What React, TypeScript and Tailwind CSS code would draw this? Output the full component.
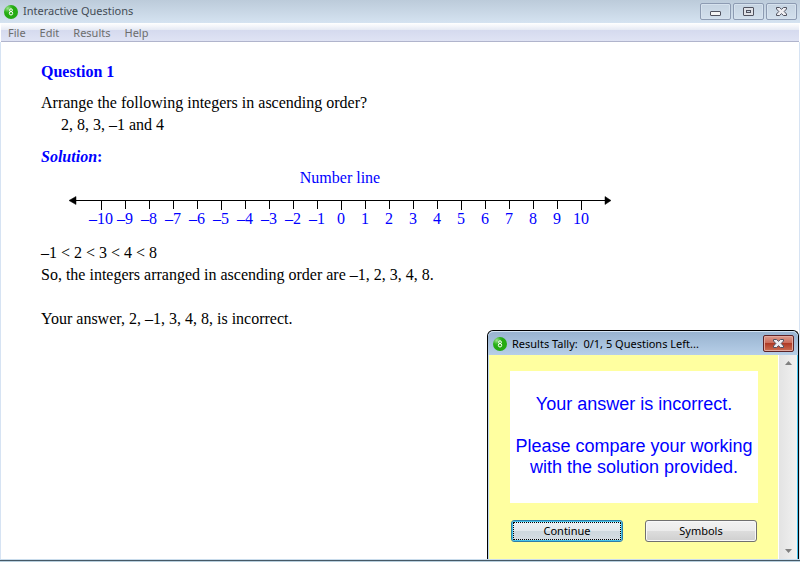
import React, { useState } from 'react';

const menus = ['File', 'Edit', 'Results', 'Help'];
const ticks = Array.from({ length: 21 }, (_, i) => i - 10);

const formatNumber = (n: number) => (n < 0 ? `–${Math.abs(n)}` : `${n}`);

const AppIcon: React.FC = () => (
  <svg width="14" height="14" viewBox="0 0 14 14" className="shrink-0" aria-hidden="true">
    <defs>
      <radialGradient id="ball" cx="0.27" cy="0.24" r="0.4">
        <stop offset="0" stopColor="#9fe392" />
        <stop offset="0.7" stopColor="#33b620" />
        <stop offset="1" stopColor="#24ab12" />
      </radialGradient>
    </defs>
    <circle cx="7" cy="7" r="7" fill="url(#ball)" />
    <circle cx="7" cy="5.2" r="1.4" fill="none" stroke="#fff" strokeWidth="1" />
    <circle cx="7" cy="8.3" r="1.7" fill="none" stroke="#fff" strokeWidth="1" />
  </svg>
);

const CrossIcon: React.FC = () => (
  <svg width="11" height="9" viewBox="0 0 11 9" aria-hidden="true">
    <path
      d="M0.5 0.5H3.5L5.5 2.3L7.5 0.5H10.5V2L8.2 4.5L10.5 7V8.5H7.5L5.5 6.7L3.5 8.5H0.5V7L2.8 4.5L0.5 2Z"
      fill="#eeeef2"
      stroke="#50525f"
      strokeWidth="1"
    />
  </svg>
);

const NumberLine: React.FC = () => (
  <svg width="600" height="74" viewBox="0 0 600 74" className="block max-w-full font-['Liberation_Serif',serif] text-base" role="img" aria-label="Number line">
    <text x="299" y="15" textAnchor="middle" fill="#0000ff">Number line</text>
    <path d="M34 32.5H566" stroke="#000" />
    <path d="M28 32.5L35 28.5V36.5Z M570 32.5L564 28.5V36.5Z" fill="#000" stroke="#000" strokeWidth="0.5" />
    {ticks.map((n) => {
      const x = 300 + n * 24;
      return (
        <g key={n}>
          <path d={`M${x + 0.5} 33V${n % 5 === 0 ? 42 : 41}`} stroke="#000" />
          <text x={x} y="56" textAnchor="middle" fill="#0000ff">{formatNumber(n)}</text>
        </g>
      );
    })}
  </svg>
);

const captionButton = 'flex h-[17px] w-[31px] items-center justify-center rounded-[2px] border border-[#8d9bb2] bg-gradient-to-b from-[#c5d3e1] to-[#d3e0ed] shadow-[inset_0_0_0_1px_#d6e2ee]';

const pushButton = 'h-[22px] w-28 rounded-[3px] border text-[11px] leading-5';

const ResultsDialog: React.FC<{ onClose: () => void }> = ({ onClose }) => (
  <section
    role="dialog"
    aria-label="Results Tally"
    className="absolute right-0 bottom-0 flex w-[312px] flex-col rounded-t-md border border-b-0 border-black bg-[#b5cce6]"
  >
    <header className="flex h-6 items-center gap-[5px] rounded-t-md border-t border-[#d5e5f5] bg-gradient-to-b from-[#98b3d0] to-[#b7cfe8] pr-1 pl-[5px]">
      <AppIcon />
      <h2 className="flex-1 text-[11px] whitespace-pre text-black">Results Tally:  0/1, 5 Questions Left...</h2>
      <button
        type="button"
        aria-label="Close"
        onClick={onClose}
        className="flex h-[17px] w-[31px] items-center justify-center rounded-[2px] border border-[#5c2327] bg-[linear-gradient(#dc9a8c_0%,#cb6d5b_45%,#b03b26_50%,#cc6e52_100%)] shadow-[inset_0_0_0_1px_#e2a99e]"
      >
        <CrossIcon />
      </button>
    </header>
    <div className="flex border-r border-l border-r-[#46c4f0] border-l-[#c0d8ee]">
      <div className="flex-1 bg-[#ffffa0] pt-4 pr-5 pb-[17px] pl-[21px]">
        <div className="h-[132px] bg-white pt-[23px] text-center font-['Liberation_Sans',sans-serif] text-lg leading-[21px] text-[#0000ff]">
          <p>Your answer is incorrect.</p>
          <p className="mt-[21px]">
            Please compare your working
            <br />
            with the solution provided.
          </p>
        </div>
        <div className="mt-[17px] flex gap-[22px] pl-px">
          <button
            type="button"
            onClick={onClose}
            className={`${pushButton} border-[#2f7da8] bg-[linear-gradient(#eef2f5_0%,#e2e8ec_50%,#ced8de_50%,#d5dde2_100%)] shadow-[inset_0_0_0_1px_#48c5ec] outline-1 outline-offset-[-3px] outline-black outline-dotted`}
          >
            Continue
          </button>
          <button
            type="button"
            className={`${pushButton} border-[#707070] bg-[linear-gradient(#f2f2f2_0%,#ebebeb_50%,#dddddd_50%,#cfcfcf_100%)] shadow-[inset_0_0_0_1px_#f8f8f8]`}
          >
            Symbols
          </button>
        </div>
      </div>
      <div className="flex w-[19px] flex-col items-center justify-between border-l border-white bg-gradient-to-r from-[#e3e3e3] to-[#f1f1f1] py-1.5">
        <svg width="7" height="4" viewBox="0 0 7 4" aria-hidden="true">
          <path d="M0 4L3.5 0L7 4Z" fill="#808080" />
        </svg>
        <svg width="7" height="4" viewBox="0 0 7 4" aria-hidden="true">
          <path d="M0 0L3.5 4L7 0Z" fill="#808080" />
        </svg>
      </div>
    </div>
  </section>
);

const App: React.FC = () => {
  const [showResults, setShowResults] = useState(true);

  return (
    <div className="flex min-h-screen flex-col bg-white font-['Noto_Sans','Open_Sans',sans-serif]">
      <header className="flex h-[23px] items-center gap-[5px] bg-gradient-to-b from-[#bccbda] to-[#d5e3f1] pr-[3px] pl-1">
        <AppIcon />
        <h1 className="flex-1 text-[11px] text-[#444c55]">Interactive Questions</h1>
        <div className="flex gap-0.5">
          <button type="button" aria-label="Minimize" className={captionButton}>
            <svg width="11" height="9" viewBox="0 0 11 9" aria-hidden="true">
              <rect x="0.5" y="4.5" width="10" height="4" rx="0.5" fill="#f4f4f4" stroke="#50525f" />
            </svg>
          </button>
          <button type="button" aria-label="Maximize" className={captionButton}>
            <svg width="11" height="9" viewBox="0 0 11 9" aria-hidden="true">
              <rect x="0.5" y="0.5" width="10" height="8" rx="0.5" fill="#dfe1e6" stroke="#50525f" />
              <rect x="3.5" y="3.5" width="4" height="2" fill="#c9d6e4" stroke="#50525f" />
            </svg>
          </button>
          <button type="button" aria-label="Close" className={captionButton}>
            <CrossIcon />
          </button>
        </div>
      </header>
      <nav className="mx-px flex h-[19px] items-center gap-[14px] border-b border-[#b0b4cc] bg-[linear-gradient(#ffffff_0%,#e6eaf4_38%,#d5daee_40%,#dfe3f4_100%)] pt-0.5 pl-[7px] text-[11px] text-[#6d6d6d]">
        {menus.map((menu) => (
          <button key={menu} type="button">{menu}</button>
        ))}
      </nav>
      <main className="relative flex-1 border-r border-l border-[#d6e3f3] pt-[19px] pl-10 font-['Liberation_Serif',serif] text-base leading-[22px] text-black">
        <h2 className="font-bold text-[#0000ff]">Question 1</h2>
        <p className="mt-[9px]">Arrange the following integers in ascending order?</p>
        <p className="pl-5">2, 8, 3, –1 and 4</p>
        <h3 className="mt-[10px] font-bold text-[#0000ff]"><em>Solution</em>:</h3>
        <NumberLine />
        <p>–1 &lt; 2 &lt; 3 &lt; 4 &lt; 8</p>
        <p>So, the integers arranged in ascending order are –1, 2, 3, 4, 8.</p>
        <p className="mt-[22px]">Your answer, 2, –1, 3, 4, 8, is incorrect.</p>
        {showResults && (
          <div className="font-['Noto_Sans','Open_Sans',sans-serif] leading-4">
            <ResultsDialog onClose={() => setShowResults(false)} />
          </div>
        )}
      </main>
      <footer className="h-[3px] border-t border-b border-t-[#c9dcec] border-b-[#b8cfde] bg-[#455866]" />
    </div>
  );
};

export default App;
